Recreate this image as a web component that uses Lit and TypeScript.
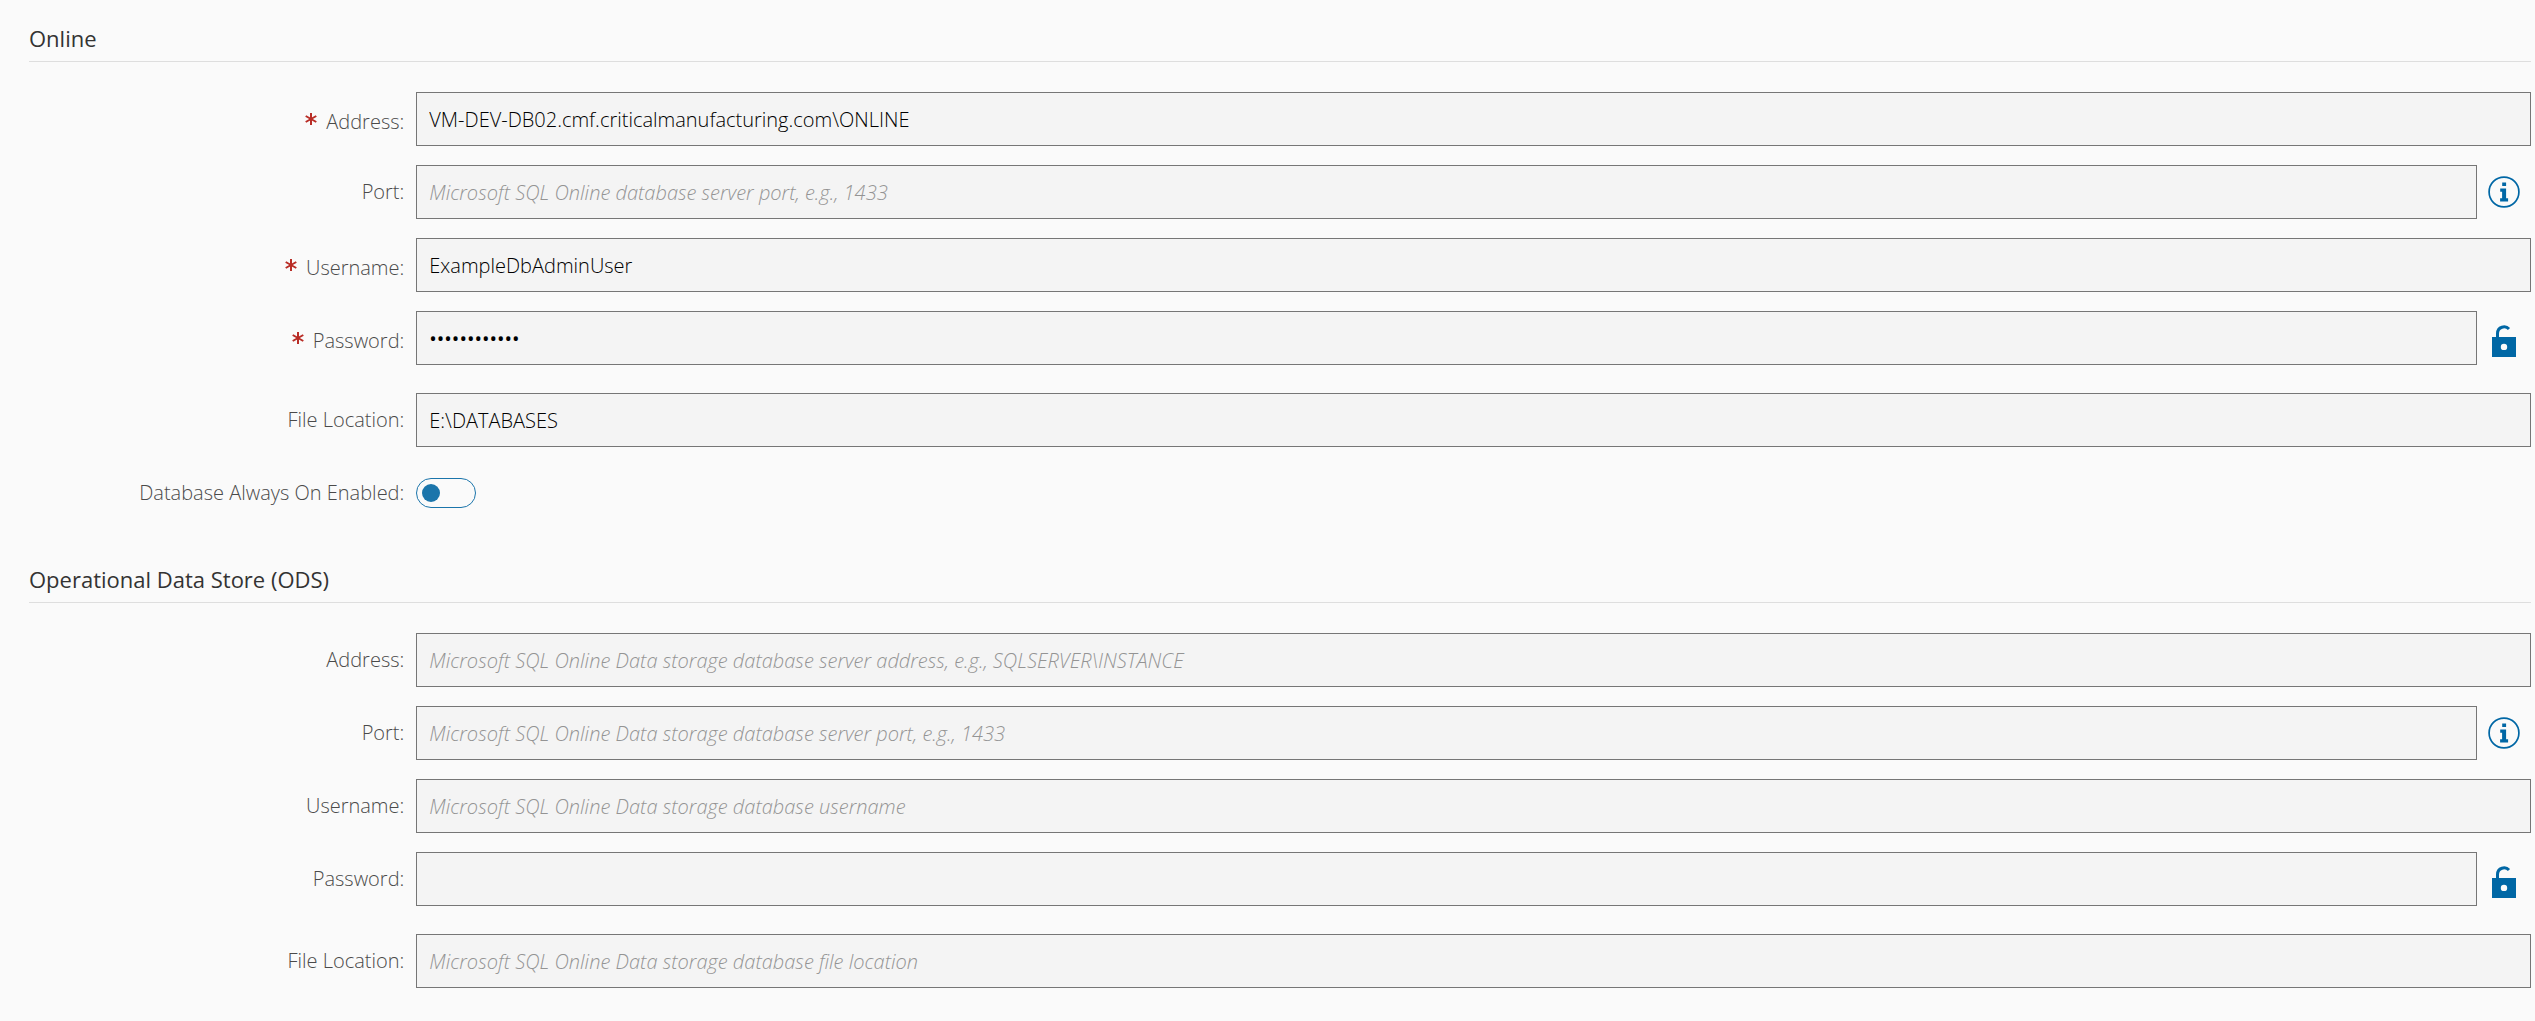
import { LitElement, html, css, nothing } from "lit";
import { customElement, property } from "lit/decorators.js";

type FieldKind = "text" | "password";

interface Field {
  id: string;
  label: string;
  value?: string;
  placeholder?: string;
  required?: boolean;
  kind?: FieldKind;
  action?: "info" | "unlock";
}

interface Section {
  title: string;
  fields: Field[];
  toggle?: { id: string; label: string };
}

const SECTIONS: Section[] = [
  {
    title: "Online",
    fields: [
      {
        id: "online-address",
        label: "Address:",
        value: "VM-DEV-DB02.cmf.criticalmanufacturing.com\\ONLINE",
        required: true,
      },
      {
        id: "online-port",
        label: "Port:",
        placeholder: "Microsoft SQL Online database server port, e.g., 1433",
        action: "info",
      },
      { id: "online-username", label: "Username:", value: "ExampleDbAdminUser", required: true },
      {
        id: "online-password",
        label: "Password:",
        value: "examplepass1",
        required: true,
        kind: "password",
        action: "unlock",
      },
      { id: "online-file", label: "File Location:", value: "E:\\DATABASES" },
    ],
    toggle: { id: "online-always-on", label: "Database Always On Enabled:" },
  },
  {
    title: "Operational Data Store (ODS)",
    fields: [
      {
        id: "ods-address",
        label: "Address:",
        placeholder: "Microsoft SQL Online Data storage database server address, e.g., SQLSERVER\\INSTANCE",
      },
      {
        id: "ods-port",
        label: "Port:",
        placeholder: "Microsoft SQL Online Data storage database server port, e.g., 1433",
        action: "info",
      },
      {
        id: "ods-username",
        label: "Username:",
        placeholder: "Microsoft SQL Online Data storage database username",
      },
      { id: "ods-password", label: "Password:", kind: "password", action: "unlock" },
      {
        id: "ods-file",
        label: "File Location:",
        placeholder: "Microsoft SQL Online Data storage database file location",
      },
    ],
  },
];

const infoIcon = html`<svg class="icon" viewBox="0 0 32 32" aria-hidden="true">
  <circle cx="16" cy="16" r="14.9" fill="none" stroke="currentColor" stroke-width="1.7" />
  <path fill="currentColor" d="M14.2 6.6h3.9v3.4h-3.9zM12.2 12.6h5.9v9.6h2v3.2h-8v-3.2h2v-6.4h-1.9z" />
</svg>`;

const unlockIcon = html`<svg class="icon" viewBox="0 0 32 32" aria-hidden="true">
  <path fill="none" stroke="currentColor" stroke-width="3" d="M9.5 14V8.6C9.5 1.600 17.500 0.200 21 4" />
  <path
    fill="currentColor"
    fill-rule="evenodd"
    d="M4 12h24v20H4zM16 18.700a3.200 3.200 0 1 0 0 6.400a3.200 3.200 0 1 0 0-6.400z"
  />
</svg>`;

@customElement("db-section")
export class DbSection extends LitElement {
  @property({ attribute: false }) section!: Section;

  static styles = css`
    :host {
      display: block;
    }
    .title {
      margin: 0;
      padding-bottom: 9px;
      border-bottom: 1px solid #dedede;
      color: #333;
      font-size: 22px;
      font-weight: 400;
      line-height: 28px;
    }
    .rows {
      display: flex;
      flex-direction: column;
      gap: 19px;
      padding-top: 30px;
    }
    .row {
      display: grid;
      grid-template-columns: 15% minmax(0, 1fr);
      column-gap: 12px;
    }
    .row.password {
      padding-bottom: 9px;
    }
    .label {
      display: flex;
      align-items: center;
      justify-content: flex-end;
      gap: 9px;
      color: #4a4a4a;
      line-height: 28px;
    }
    .label.required {
      padding-top: 5px;
    }
    .star {
      flex: none;
      width: 12px;
      height: 12px;
      margin-bottom: 5px;
      color: #b92d26;
    }
    .control {
      display: flex;
      align-items: center;
    }
    .input {
      box-sizing: border-box;
      flex: 1;
      min-width: 0;
      height: 54px;
      margin: 0;
      padding: 0 12px;
      border: 1px solid #767676;
      border-radius: 0;
      outline: none;
      background: #f4f4f4;
      color: #000;
      font: inherit;
    }
    .password .input {
      font-weight: 500;
    }
    .input::placeholder {
      color: #949494;
      font-style: italic;
      opacity: 1;
    }
    .action {
      flex: none;
      padding: 0 11px;
      border: 0;
      background: none;
      color: #0067a5;
      line-height: 0;
      cursor: pointer;
    }
    .password .action {
      padding-top: 5px;
    }
    .icon {
      width: 32px;
      height: 32px;
    }
    .switch {
      appearance: none;
      display: flex;
      align-items: center;
      box-sizing: border-box;
      width: 60px;
      height: 30px;
      margin: 0;
      padding: 0 5px;
      border: 1px solid #1b75ab;
      border-radius: 15px;
      cursor: pointer;
    }
    .switch::before {
      content: "";
      width: 18px;
      height: 18px;
      border-radius: 50%;
      background: #1b75ab;
    }
    .switch:checked {
      justify-content: flex-end;
    }
    .toggle {
      padding-top: 12px;
    }
  `;

  private renderField(f: Field) {
    return html`<div class="row ${f.kind ?? "text"}">
      <label class="label ${f.required ? "required" : ""}" for=${f.id}>
        ${f.required
          ? html`<svg class="star" viewBox="0 0 12 12" aria-hidden="true">
              <path fill="none" stroke="currentColor" stroke-width="2" d="M6 0V12M.7 3L11.300 9M11.300 3L.7 9" />
            </svg>`
          : nothing}
        <span>${f.label}</span>
      </label>
      <div class="control">
        <input
          class="input"
          id=${f.id}
          type=${f.kind ?? "text"}
          autocomplete="off"
          spellcheck="false"
          ?required=${f.required}
          placeholder=${f.placeholder ?? nothing}
          .value=${f.value ?? ""}
        />
        ${f.action === "info"
          ? html`<button class="action" type="button" aria-label="Port information">${infoIcon}</button>`
          : nothing}
        ${f.action === "unlock"
          ? html`<button class="action" type="button" aria-label="Show password">${unlockIcon}</button>`
          : nothing}
      </div>
    </div>`;
  }

  render() {
    const { title, fields, toggle } = this.section;
    return html`<h2 class="title">${title}</h2>
      <div class="rows">
        ${fields.map((f) => this.renderField(f))}
        ${toggle
          ? html`<div class="row toggle">
              <label class="label" for=${toggle.id}>${toggle.label}</label>
              <div class="control"><input class="switch" id=${toggle.id} type="checkbox" role="switch" /></div>
            </div>`
          : nothing}
      </div>`;
  }
}

@customElement("app-root")
export class AppRoot extends LitElement {
  static styles = css`
    :host {
      display: block;
      box-sizing: border-box;
      min-height: 100vh;
      background: #fafafa;
      font-family: "Open Sans", "Noto Sans", sans-serif;
      font-size: 20px;
      font-weight: 300;
    }
    .form {
      display: flex;
      flex-direction: column;
      gap: 57px;
      padding: 24px 4px 32px 29px;
    }
  `;

  render() {
    return html`<form class="form">
      ${SECTIONS.map((s) => html`<db-section .section=${s}></db-section>`)}
    </form>`;
  }
}
